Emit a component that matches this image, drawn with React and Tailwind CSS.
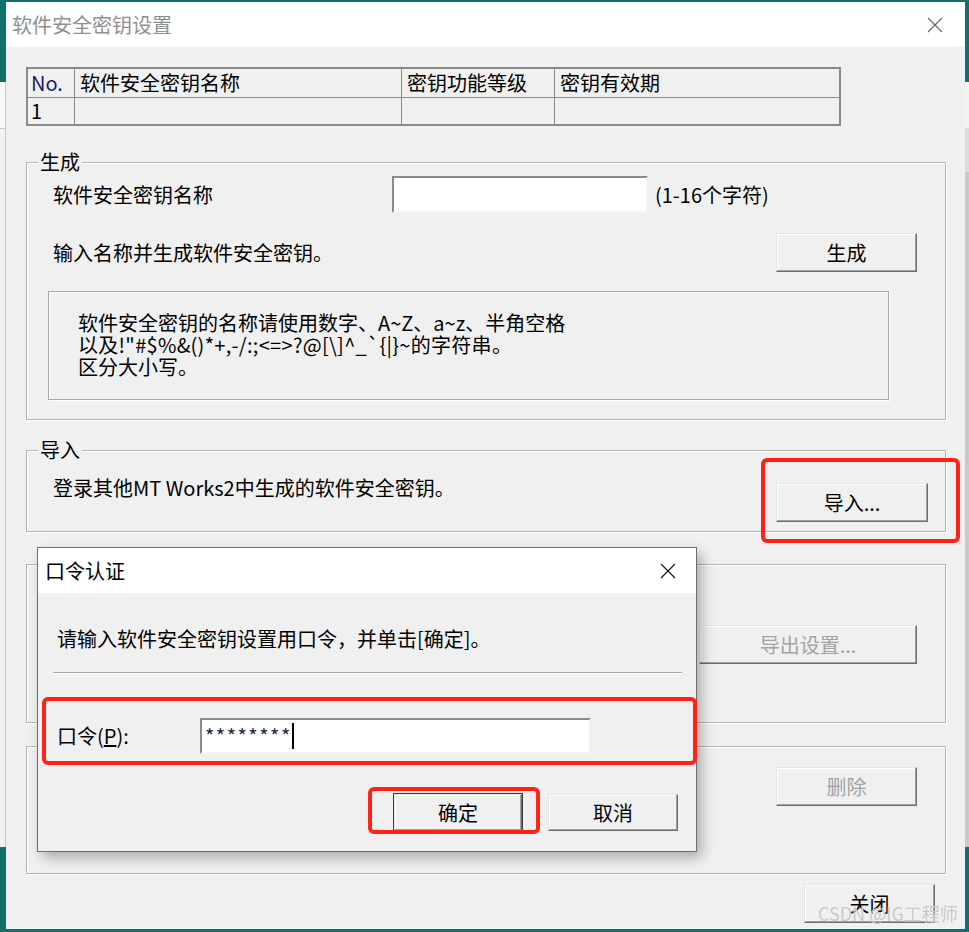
import React from "react";

const btn =
  "flex items-center justify-center bg-[#f0f0f0] border border-t-[#e3e3e3] border-l-[#e3e3e3] border-b-[#6e6e6e] border-r-[#6e6e6e] shadow-[inset_-1px_-1px_0_#a0a0a0,inset_1px_1px_0_#fff] text-[20px] leading-[24px]";
const sunken =
  "bg-white border-2 border-t-[#8a8a8a] border-l-[#8a8a8a] border-b-[#f4f4f4] border-r-[#f4f4f4]";
const group =
  "border border-[#b4b4b4] shadow-[inset_1px_1px_0_#fff,1px_1px_0_#fff] pl-[11px]";
const legend = "px-[2px] text-[20px] leading-[24px] bg-[#f0f0f0]";

function CloseX({ color = "#555" }) {
  return (
    <svg width="16" height="16" viewBox="0 0 16 16" fill="none" stroke={color} strokeWidth="1.1">
      <path d="M1 1 L15 15 M15 1 L1 15" />
    </svg>
  );
}

function RedBox({ className }) {
  return <div className={`absolute border-[4px] border-[#ff2216] rounded-[6px] ${className}`} />;
}

export default function App() {
  return (
    <div className="relative w-[969px] h-[932px] bg-[#10706b] overflow-hidden font-['Noto_Sans_CJK_SC','Microsoft_YaHei',sans-serif] text-black">
      {/* windows behind */}
      <div className="absolute left-0 top-[82px] w-[6px] h-[765px] bg-[#f3f3f3] border-r border-[#c8c8c8]">
        <div className="h-[46px] bg-[#f7f9fb]" />
        <div className="h-px bg-[#c8c8c8]" />
      </div>
      <div className="absolute left-[965px] top-[82px] w-[4px] h-[765px] bg-[#ededed]">
        <div className="h-[46px] bg-[#f3f3f3]" />
        <div className="h-[44px] bg-[#dcdcdc]" />
        <div className="h-[675px] bg-[#c9c9c9]" />
      </div>

      {/* main window */}
      <div className="absolute left-[6px] top-[2px] w-[959px] h-[927px] bg-[#f0f0f0] flex flex-col">
        <div className="h-[45px] bg-white flex items-center justify-between pl-[6px] pr-[22px]">
          <span className="text-[20px] leading-[24px] text-[#8f8f8f]">软件安全密钥设置</span>
          <CloseX color="#666" />
        </div>

        <div className="pl-[20px] pr-[19px] pt-[20px] flex flex-col">
          {/* table */}
          <div className="w-[815px] border-2 border-[#8a8a8a] text-[20px] leading-[24px]">
            <div className="grid grid-cols-[47px_327px_153px_1fr] h-[29px] border-b border-[#8a8a8a]">
              <div className="border-r border-[#8a8a8a] pl-[3px] flex items-center text-[#1a1a6a]">No.</div>
              <div className="border-r border-[#8a8a8a] pl-[5px] flex items-center">软件安全密钥名称</div>
              <div className="border-r border-[#8a8a8a] pl-[5px] flex items-center">密钥功能等级</div>
              <div className="pl-[5px] flex items-center">密钥有效期</div>
            </div>
            <div className="grid grid-cols-[47px_327px_153px_1fr] h-[26px]">
              <div className="border-r border-[#8a8a8a] pl-[3px] flex items-center">1</div>
              <div className="border-r border-[#8a8a8a]" />
              <div className="border-r border-[#8a8a8a]" />
              <div />
            </div>
          </div>

          {/* 生成 */}
          <fieldset className={`${group} mt-[24px] pr-[28px] pb-[19px]`}>
            <legend className={legend}>生成</legend>
            <div className="mt-[2px] flex items-center h-[37px] text-[20px] leading-[24px]">
              <div className="w-[354px] pl-[15px]">软件安全密钥名称</div>
              <div className={`${sunken} w-[256px] h-[37px]`} />
              <div className="ml-[7px]">(1-16个字符)</div>
            </div>
            <div className="mt-[20px] flex items-center justify-between h-[39px]">
              <div className="pl-[15px] text-[20px] leading-[24px]">输入名称并生成软件安全密钥。</div>
              <button className={`${btn} w-[141px] h-[39px]`}>生成</button>
            </div>
            <div className="mt-[19px] ml-[10px] w-[841px] h-[109px] border border-[#a8a8a8] shadow-[inset_1px_1px_0_#fff,1px_1px_0_#fff] pt-[20px] pl-[29px] text-[20px] leading-[22px]">
              <div>软件安全密钥的名称请使用数字、A~Z、a~z、半角空格</div>
              <div className="tracking-[0.3px]">以及!"#$%&amp;()*+,-/:;&lt;=&gt;?@[\]^_`{"{|}"}~的字符串。</div>
              <div>区分大小写。</div>
            </div>
          </fieldset>

          {/* 导入 */}
          <fieldset className={`${group} mt-[18px] pr-[17px] pb-[9px]`}>
            <legend className={legend}>导入</legend>
            <div className="flex items-start justify-between">
              <div className="pl-[15px] pt-[14px] text-[20px] leading-[24px]">登录其他MT Works2中生成的软件安全密钥。</div>
              <button className={`${btn} mt-[21px] w-[152px] h-[39px]`}>导入...</button>
            </div>
          </fieldset>

          {/* 导出 (label hidden behind the dialog) */}
          <fieldset className={`${group} mt-[20px] pr-[28px] pb-[58px]`}>
            <legend className={`${legend} invisible`}>导出</legend>
            <div className="flex justify-end">
              <button disabled className={`${btn} mt-[49px] w-[218px] h-[39px] text-[#a3a3a3]`}>导出设置...</button>
            </div>
          </fieldset>

          {/* 删除 (label hidden behind the dialog) */}
          <fieldset className={`${group} mt-[11px] pr-[28px] pb-[67px]`}>
            <legend className={`${legend} invisible`}>删除</legend>
            <div className="flex justify-end">
              <button disabled className={`${btn} mt-[9px] w-[141px] h-[39px] text-[#a3a3a3]`}>删除</button>
            </div>
          </fieldset>

          <div className="mt-[10px] flex justify-end pr-[11px]">
            <button className={`${btn} w-[131px] h-[39px]`}>关闭</button>
          </div>
        </div>
      </div>

      {/* password dialog */}
      <div className="absolute left-[37px] top-[547px] w-[660px] h-[305px] border border-[#6e6e6e] bg-[#f0f0f0] shadow-[5px_6px_12px_rgba(0,0,0,0.28)] flex flex-col">
        <div className="h-[45px] bg-white flex items-center justify-between pl-[7px] pr-[20px]">
          <span className="text-[20px] leading-[24px]">口令认证</span>
          <CloseX color="#111" />
        </div>
        <div className="flex flex-col text-[20px] leading-[24px]">
          <div className="pt-[34px] pl-[19px]">请输入软件安全密钥设置用口令，并单击[确定]。</div>
          <div className="mt-[21px] ml-[15px] w-[629px] border-t border-[#a6a6a6] border-b border-b-white" />
          <div className="mt-[44px] flex items-center">
            <div className="w-[162px] pl-[19px]">
              口令(<span className="underline">P</span>):
            </div>
            <div className={`${sunken} w-[391px] h-[36px] flex items-center pl-[3px]`}>
              <span className="text-[20px] leading-[22px] tracking-[1.5px] text-[#1b2a4a]">********</span>
              <span className="w-[2px] h-[26px] bg-black" />
            </div>
          </div>
          <div className="mt-[40px] flex justify-end gap-[26px] pr-[18px]">
            <button className={`${btn} w-[128px] h-[37px] outline outline-1 outline-[#3c3c3c]`}>确定</button>
            <button className={`${btn} w-[130px] h-[37px]`}>取消</button>
          </div>
        </div>
      </div>

      {/* annotations */}
      <RedBox className="left-[761px] top-[458px] w-[199px] h-[85px]" />
      <RedBox className="left-[42px] top-[697px] w-[655px] h-[68px]" />
      <RedBox className="left-[368px] top-[787px] w-[172px] h-[47px]" />

      <div className="absolute left-[818px] top-[902px] text-[18px] leading-[22px] text-[#b8b8b8]/80 [text-shadow:0_0_1px_#fff]">
        CSDN @IG工程师
      </div>
    </div>
  );
}
